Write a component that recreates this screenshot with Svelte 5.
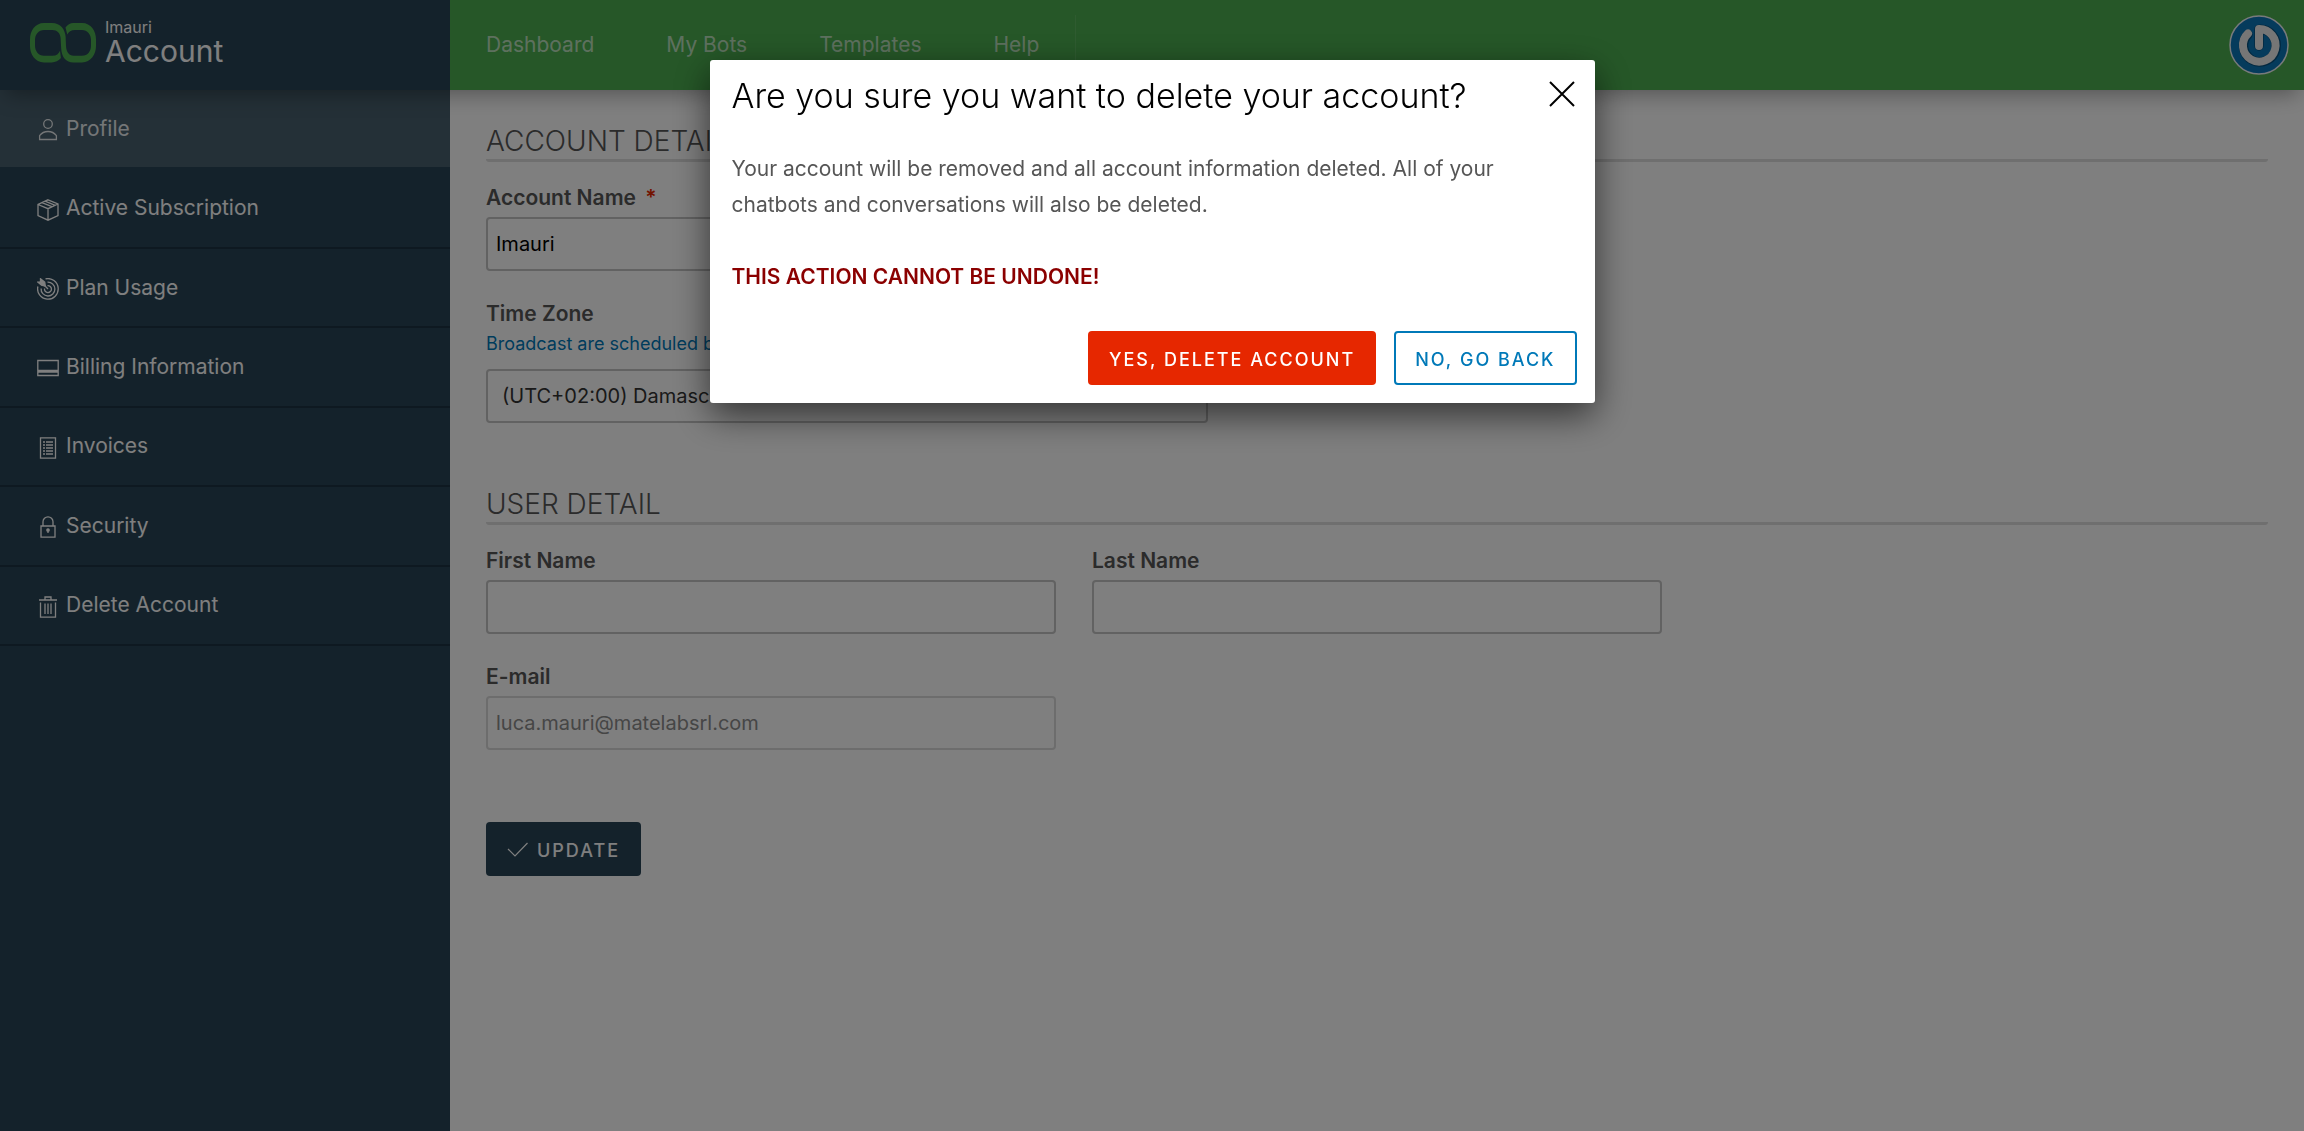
<script>
  const navItems = ['Dashboard', 'My Bots', 'Templates', 'Help'];
  const menu = [
    { label: 'Profile', icon: 'user' },
    { label: 'Active Subscription', icon: 'box' },
    { label: 'Plan Usage', icon: 'target' },
    { label: 'Billing Information', icon: 'card' },
    { label: 'Invoices', icon: 'list' },
    { label: 'Security', icon: 'lock' },
    { label: 'Delete Account', icon: 'trash' }
  ];
  let active = $state('Profile');
  let open = $state(true);
  let accountName = $state('Imauri');
  let firstName = $state('');
  let lastName = $state('');
</script>

<div class="app">
  <header class="header">
    <a class="brand" href="#account">
      <svg class="logo" viewBox="0 0 66 40" aria-hidden="true">
        <path
          d="M30 27.700 30.900 35C29 37.600 25 39.400 21.700 39.400H14C5 39.400 0 31 0 23V16.500C0 8 5 0 14 0h7.700C31 0 35 7 35.600 13.500L36 23c.3 6 3 9.700 7.500 9.700h8.500c6 0 9-5 9-10V17c0-5.500-3.500-10-9-10h-7c-4 0-6.500 1.800-7.700 4.600L35.500 4.500C37.300 1.800 40.300 0 43.500 0H52C61 0 66 8 66 16.500V23c0 8-5 16.400-14 16.400h-8.500C36 39.400 31.600 34 31.200 25.500L30.600 15C30.300 10 27 7 22.500 7H14C8.500 7 5 11.500 5 17v5.700c0 5 3.300 10 9 10h8.500c4 0 6.300-2 7.500-5z"
        />
      </svg>
      <span class="brand-text">
        <span class="brand-small">Imauri</span>
        <span class="brand-big">Account</span>
      </span>
    </a>
    <nav class="topnav" aria-label="Main">
      {#each navItems as item}
        <a href="#top">{item}</a>
      {/each}
    </nav>
    <button class="avatar" type="button" aria-label="User menu">
      <svg viewBox="0 0 60 60" aria-hidden="true">
        <circle cx="30" cy="30" r="29" fill="#0a76b8" stroke="#f0f4f8" stroke-width="1.500" />
        <g fill="none" stroke-linecap="round" stroke-linejoin="round">
          <path d="M19 19.500A16.300 16.300 0 1 0 30 14.400V31" stroke="#06507f" stroke-width="9.500" />
          <path d="M19 18.500A16.300 16.300 0 1 0 30 14V31" stroke="#ececec" stroke-width="8" />
        </g>
      </svg>
    </button>
  </header>

  <div class="body">
    <aside class="sidebar">
      <ul class="menu">
        {#each menu as item}
          <li>
            <a
              href="#menu"
              class:active={active === item.label}
              aria-current={active === item.label ? 'page' : undefined}
              onclick={() => (active = item.label)}
            >
              <svg class="icon" viewBox="0 0 22 22" aria-hidden="true">
                {#if item.icon === 'user'}
                  <circle cx="11" cy="5" r="4.300" />
                  <path d="M2.600 20.500v-3.800c2-2.700 5-4.200 8.400-4.200s6.400 1.500 8.400 4.200v3.800z" />
                {:else if item.icon === 'box'}
                  <path d="M11 .8 21 5v11.700L11 21.200 1 16.700V5.500zM1 5.500l10 4.200L21 5M11 9.700v11.500M5 3.700l10.500 4.200M8 2.200l10.200 4.200" />
                {:else if item.icon === 'target'}
                  <path d="M8.500.9A10.300 10.300 0 1 1 .9 8.500" />
                  <path d="M10.500 4.200a6.900 6.900 0 1 1-6.400 6.300" />
                  <path d="M10.500 7.600a3.500 3.500 0 1 1-3 2.900M11 11 6 6" />
                  <path class="solid" d="M3.500.8 7.700 4.200 8.300 8.200 4.500 7.200.8 4l2.700-.2z" />
                {:else if item.icon === 'card'}
                  <path d="M.8 3.500h20.400v15H.8z" />
                  <path d="M1 13.500h20M1 15h20" />
                {:else if item.icon === 'list'}
                  <path d="M3.500.8h15v20.400h-15z" />
                  <path d="M6 5h2M9 5h7M6 8h2M9 8h7M6 11h2M9 11h7M6 14h2M9 14h7M6 17h2M9 17h7" />
                {:else if item.icon === 'lock'}
                  <path d="M4 10h14v11.200H4zM6 10V5.800a5 5 0 0 1 10 0V10" />
                  <circle class="solid" cx="11" cy="14" r="1.200" />
                  <path d="M11 14v3" />
                {:else}
                  <path d="M2 4h18M3.500 6.500v14.700h15V6.500M8 4V1h6v3M8 7.500v10.500M11 7.500v10.500M14 7.500v10.500" />
                {/if}
              </svg>
              {item.label}
            </a>
          </li>
        {/each}
      </ul>
    </aside>

    <main class="content">
      <form onsubmit={(e) => e.preventDefault()}>
        <h2>ACCOUNT DETAIL</h2>
        <div class="grid">
          <div class="field">
            <label for="account-name">Account Name <span class="required">*</span></label>
            <input id="account-name" type="text" bind:value={accountName} />
          </div>
        </div>
        <div class="field zone">
          <label for="zone">Time Zone</label>
          <a class="hint" href="#zone">Broadcast are scheduled based on this time zone</a>
          <select id="zone">
            <option>(UTC+02:00) Damascus</option>
          </select>
        </div>

        <h2 class="second">USER DETAIL</h2>
        <div class="grid">
          <div class="field">
            <label for="first">First Name</label>
            <input id="first" type="text" bind:value={firstName} />
          </div>
          <div class="field">
            <label for="last">Last Name</label>
            <input id="last" type="text" bind:value={lastName} />
          </div>
        </div>
        <div class="grid">
          <div class="field">
            <label for="email">E-mail</label>
            <input id="email" type="email" value="luca.mauri@matelabsrl.com" disabled />
          </div>
        </div>
        <button class="btn update" type="submit">
          <svg viewBox="0 0 22 16" aria-hidden="true"><path d="M1 7l7 7L20.500 1" /></svg>
          UPDATE
        </button>
      </form>
    </main>
  </div>
</div>

{#if open}
  <div class="backdrop">
    <div class="modal" role="dialog" aria-modal="true" aria-labelledby="modal-title">
      <div class="modal-head">
        <h3 id="modal-title">Are you sure you want to delete your account?</h3>
        <button class="close" type="button" aria-label="Close" onclick={() => (open = false)}>
          <svg viewBox="0 0 26 26" aria-hidden="true"><path d="M1 1l24 24M25 1 1 25" /></svg>
        </button>
      </div>
      <div class="modal-body">
        <p>
          Your account will be removed and all account information deleted. All of your chatbots and
          conversations will also be deleted.
        </p>
        <p class="warning">THIS ACTION CANNOT BE UNDONE!</p>
      </div>
      <div class="modal-foot">
        <button class="btn danger" type="button">YES, DELETE ACCOUNT</button>
        <button class="btn outline" type="button" onclick={() => (open = false)}>NO, GO BACK</button>
      </div>
    </div>
  </div>
{/if}

<style>
  :global(body) {
    background: #fff;
    font-family: Inter, 'Open Sans', 'Liberation Sans', sans-serif;
  }

  .app {
    display: flex;
    flex-direction: column;
    min-height: 100vh;
    color: #565656;
    font-size: 21px;
    line-height: 36px;
  }

  a {
    color: inherit;
    text-decoration: none;
  }

  button,
  input,
  select {
    box-sizing: border-box;
    font-family: inherit;
  }

  /* Header */
  .header {
    display: flex;
    align-items: center;
    height: 90px;
    background: #4caf50;
    box-shadow: 0 10px 20px -6px rgba(0, 0, 0, 0.35);
    position: relative;
    z-index: 1;
  }

  .brand {
    display: flex;
    box-sizing: border-box;
    flex: none;
    gap: 9px;
    width: 450px;
    height: 100%;
    padding: 15px 30px 0;
    background: #294556;
    color: #fff;
  }

  .logo {
    width: 66px;
    height: 40px;
    margin-top: 8px;
    fill: #4caf50;
  }

  .brand-text {
    display: flex;
    flex-direction: column;
  }

  .brand-small {
    font-size: 16px;
    line-height: 24px;
  }

  .brand-big {
    font-size: 30px;
    line-height: 24px;
  }

  .topnav {
    display: flex;
    height: 60px;
    border-right: 1px solid rgba(255, 255, 255, 0.1);
    line-height: 60px;
  }

  .topnav a {
    padding: 0 36px;
    color: rgba(255, 255, 255, 0.65);
  }

  .avatar {
    width: 60px;
    height: 60px;
    margin: 0 15px 0 auto;
    padding: 0;
    border: 0;
    background: none;
  }

  .avatar svg {
    display: block;
    width: 100%;
  }

  /* Sidebar */
  .body {
    display: flex;
    flex: 1;
  }

  .sidebar {
    flex: none;
    width: 450px;
    background: #294556;
  }

  .menu {
    display: grid;
    grid-auto-rows: 1fr;
    min-height: 556px;
    margin: 0;
    padding: 0;
    list-style: none;
  }

  .menu li {
    display: flex;
  }

  .menu a {
    display: flex;
    flex: 1;
    align-items: center;
    gap: 7px;
    padding-left: 37px;
    border-bottom: 2px solid #1d3342;
    color: #fff;
  }

  .menu a.active {
    border-color: #294556;
    background: #48606e;
    color: #e8ecee;
  }

  .icon {
    width: 22px;
    height: 22px;
    margin-top: 3px;
    fill: none;
    stroke: currentColor;
    stroke-width: 1.3;
  }

  .icon .solid {
    fill: currentColor;
  }

  /* Content */
  .content {
    flex: 1;
    padding: 33px 36px 36px;
  }

  h2 {
    margin: 0 0 18px;
    border-bottom: 3px solid #dedede;
    border-radius: 3px;
    font-size: 28px;
    font-weight: 300;
  }

  h2.second {
    margin-top: 63px;
  }

  .grid {
    display: grid;
    grid-template-columns: repeat(3, 1fr);
    gap: 36px;
    margin-bottom: 25px;
  }

  .field {
    display: flex;
    flex-direction: column;
  }

  .zone {
    width: 722px;
    max-width: 100%;
  }

  label {
    margin-bottom: 1px;
    font-weight: 600;
  }

  .required {
    margin-left: 4px;
    color: #e62700;
  }

  .hint {
    margin-bottom: 14px;
    color: #0079b8;
    font-size: 18px;
    line-height: 22px;
  }

  input,
  select {
    width: 100%;
    height: 54px;
    padding: 0 8px;
    border: 2px solid #c4c4c4;
    border-radius: 4px;
    background: #fff;
    color: #000;
    font-size: 20px;
  }

  select {
    padding: 0 14px;
    appearance: none;
    color: #333;
  }

  input:disabled {
    border-color: #dadada;
    color: #8c8c8c;
  }

  .btn {
    display: inline-flex;
    align-items: center;
    height: 54px;
    padding: 2px 19px 0;
    border: 2px solid transparent;
    border-radius: 4px;
    font-size: 18px;
    font-weight: 500;
    letter-spacing: 2px;
  }

  .update {
    gap: 8px;
    margin-top: 47px;
    background: #294556;
    color: #fff;
  }

  .update svg {
    width: 22px;
    height: 16px;
    fill: none;
    stroke: currentColor;
    stroke-width: 1.2;
  }

  /* Confirmation dialog */
  .backdrop {
    display: flex;
    position: fixed;
    z-index: 2;
    inset: 0;
    align-items: flex-start;
    justify-content: center;
    padding-top: 60px;
    background: rgba(0, 0, 0, 0.5);
  }

  .modal {
    box-sizing: border-box;
    width: 885px;
    max-width: 100%;
    padding: 18px 18px 18px 22px;
    border-radius: 3px;
    background: #fff;
    box-shadow: 0 12px 36px rgba(0, 0, 0, 0.6);
  }

  .modal-head {
    display: flex;
    justify-content: space-between;
  }

  h3 {
    margin: 0;
    color: #000;
    font-size: 34px;
    font-weight: 300;
    line-height: 36px;
  }

  .close {
    width: 26px;
    height: 26px;
    margin: 3px 2px 0 0;
    padding: 0;
    border: 0;
    background: none;
  }

  .close svg {
    display: block;
    width: 100%;
    fill: none;
    stroke: #000;
    stroke-width: 2;
  }

  .modal-body {
    margin: 37px 0 36px;
    color: #565656;
    font-size: 21px;
    line-height: 36px;
  }

  .modal-body p {
    margin: 0;
  }

  .modal-body .warning {
    margin-top: 36px;
    color: #8b0000;
    font-weight: 600;
  }

  .modal-foot {
    display: flex;
    justify-content: flex-end;
    gap: 18px;
  }

  .danger {
    background: #e62700;
    color: #fff;
  }

  .outline {
    border-color: #0079b8;
    background: #fff;
    color: #0079b8;
  }
</style>
